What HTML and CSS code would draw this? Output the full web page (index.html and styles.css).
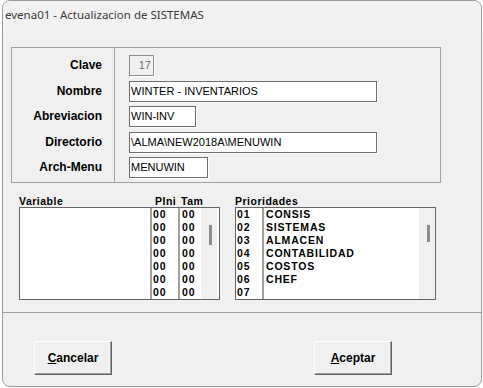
FILE: index.html
```html
<!DOCTYPE html>
<html lang="es">
<head>
<meta charset="utf-8">
<title>evena01 - Actualizacion de SISTEMAS</title>
<link rel="stylesheet" href="styles.css">
</head>
<body>
<div class="window">
  <div class="titlebar">evena01 - Actualizacion de SISTEMAS</div>

  <div class="group">
    <div class="labels">
      <div class="lbl">Clave</div>
      <div class="lbl">Nombre</div>
      <div class="lbl">Abreviacion</div>
      <div class="lbl">Directorio</div>
      <div class="lbl">Arch-Menu</div>
    </div>
    <div class="fields">
      <div class="field disabled w-clave">17</div>
      <div class="field w-long">WINTER - INVENTARIOS</div>
      <div class="field w-abrev">WIN-INV</div>
      <div class="field w-long">\ALMA\NEW2018A\MENUWIN</div>
      <div class="field w-menu">MENUWIN</div>
    </div>
  </div>

  <div class="lists">
    <div class="listcol">
      <div class="heads"><span class="h-var">Variable</span><span class="h-pini">PIni</span><span class="h-tam">Tam</span></div>
      <div class="listbox">
        <div class="col c-var"></div>
        <div class="col c-pini">
          <div class="item">00</div><div class="item">00</div><div class="item">00</div><div class="item">00</div><div class="item">00</div><div class="item">00</div><div class="item">00</div>
        </div>
        <div class="col c-tam">
          <div class="item">00</div><div class="item">00</div><div class="item">00</div><div class="item">00</div><div class="item">00</div><div class="item">00</div><div class="item">00</div>
        </div>
        <div class="scroll"><div class="thumb t-var"></div></div>
      </div>
    </div>
    <div class="listcol">
      <div class="heads"><span>Prioridades</span></div>
      <div class="listbox">
        <div class="col c-num">
          <div class="item">01</div><div class="item">02</div><div class="item">03</div><div class="item">04</div><div class="item">05</div><div class="item">06</div><div class="item">07</div>
        </div>
        <div class="col c-name">
          <div class="item">CONSIS</div><div class="item">SISTEMAS</div><div class="item">ALMACEN</div><div class="item">CONTABILIDAD</div><div class="item">COSTOS</div><div class="item">CHEF</div><div class="item"></div>
        </div>
        <div class="scroll"><div class="thumb t-pri"></div></div>
      </div>
    </div>
  </div>

  <div class="divider"></div>

  <div class="buttons">
    <div class="btn"><u>C</u>ancelar</div>
    <div class="btn"><u>A</u>ceptar</div>
  </div>
</div>
</body>
</html>
```
FILE: styles.css
```css
* { box-sizing: border-box; }
html, body { margin: 0; padding: 0; background: #ffffff; }

.window {
  margin-left: 2px;
  width: 480px;
  height: 387px;
  border: 1px solid #9c9c9c;
  border-radius: 8px;
  background: #f0f0f0;
  font-family: "Liberation Sans", Arial, sans-serif;
  color: #000;
  overflow: hidden;
}

.titlebar {
  height: 30px;
  line-height: 28px;
  padding-left: 2px;
  font-family: "Noto Sans", "Open Sans", sans-serif;
  font-size: 11.5px;
  color: #3a3a3a;
  background: #f2f2f2;
}

.group {
  display: flex;
  margin: 16px 0 0 8px;
  width: 430px;
  height: 136px;
  border: 1px solid #a0a0a0;
}
.labels {
  width: 103px;
  border-right: 1px solid #a0a0a0;
  padding: 7px 12px 0 0;
  display: flex;
  flex-direction: column;
  gap: 4.5px;
}
.lbl {
  height: 21px;
  line-height: 21px;
  text-align: right;
  font-weight: bold;
  font-size: 12px;
}
.fields {
  padding: 7px 0 0 14px;
  display: flex;
  flex-direction: column;
  gap: 4.5px;
}
.field {
  height: 21px;
  line-height: 19px;
  padding-left: 1px;
  font-size: 11px;
  background: #fff;
  border: 1px solid #6e6e6e;
  box-shadow: 1px 1px 0 #ffffff;
  white-space: nowrap;
}
.field.disabled {
  background: #f0f0f0;
  border-color: #8e8e8e;
  color: #6d6d6d;
  text-align: right;
  padding-right: 2px;
}
.w-clave { width: 25px; }
.w-long { width: 248px; }
.w-abrev { width: 67px; }
.w-menu { width: 79px; }

.lists {
  display: flex;
  gap: 15px;
  margin: 12px 0 0 16px;
}
.listcol { width: 201px; }
.heads {
  display: flex;
  height: 12px;
  line-height: 12px;
  font-size: 10.5px;
  font-weight: bold;
  letter-spacing: 0.5px;
  white-space: nowrap;
}
.h-var { width: 136px; }
.h-pini { width: 26px; }
.listbox {
  display: flex;
  height: 93px;
  border: 1px solid #646464;
  background: #fff;
}
.col {
  font-size: 10.5px;
  font-weight: bold;
  letter-spacing: 0.8px;
}
.item { height: 13px; line-height: 13px; white-space: nowrap; }
.c-var { width: 132px; border-right: 2px solid #a0a0a0; }
.c-pini { width: 28px; padding-left: 1px; border-right: 2px solid #a0a0a0; }
.c-tam { width: 21px; padding-left: 2px; }
.c-num { width: 28px; padding-left: 1px; border-right: 2px solid #a0a0a0; }
.c-name { width: 155px; padding-left: 2px; }
.scroll {
  width: 16px;
  background: #f0f0f0;
  display: flex;
  justify-content: center;
  padding-left: 2px;
}
.thumb { width: 3px; background: #8c8c8c; }
.t-var { height: 20px; margin-top: 17px; }
.t-pri { height: 17px; margin-top: 17px; }

.divider {
  margin-top: 12px;
  height: 1px;
  background: #a0a0a0;
}

.buttons {
  display: flex;
  gap: 202px;
  margin: 28px 0 0 31px;
}
.btn {
  width: 78px;
  height: 34px;
  border: 1px solid;
  border-color: #ffffff #646464 #646464 #ffffff;
  box-shadow: inset -1px -1px 0 #a0a0a0;
  background: #f0f0f0;
  font-size: 12px;
  font-weight: bold;
  text-align: center;
  line-height: 32px;
}
```
